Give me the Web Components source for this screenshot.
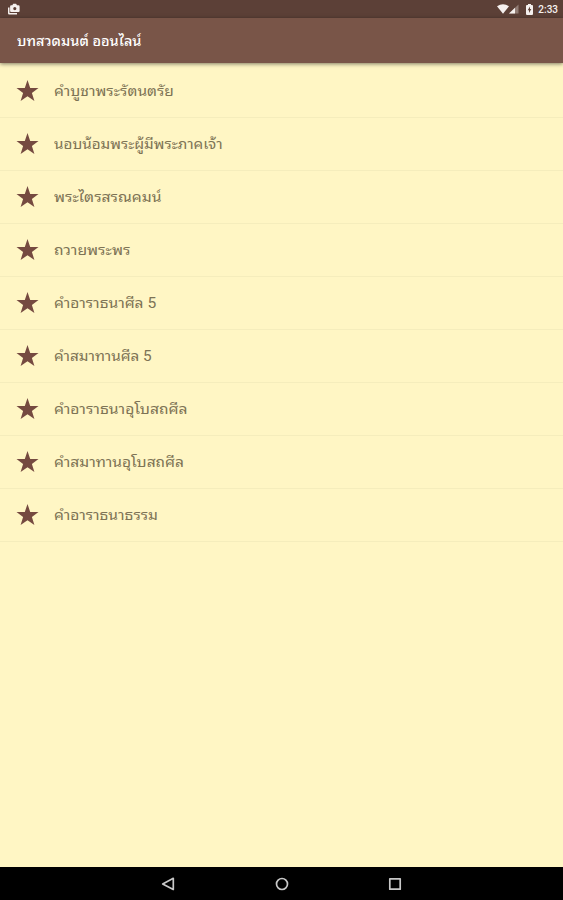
<!DOCTYPE html>
<html lang="th">
<head>
  <meta charset="utf-8">
  <meta name="viewport" content="width=device-width, initial-scale=1">
  <title>บทสวดมนต์ ออนไลน์</title>
  <style>
    body {
      margin: 0;
      height: 100vh;
      overflow: hidden;
      font-family: Roboto, "Noto Sans Thai Looped", "Noto Sans", sans-serif;
    }
  </style>
</head>
<body>
  <prayer-app></prayer-app>

  <script>
    class StatusBar extends HTMLElement {
      constructor () {
        super()
        this.attachShadow({ mode: 'open' }).innerHTML = `
          <style>
            :host {
              display: flex;
              flex: none;
              align-items: center;
              height: 18px;
              box-sizing: border-box;
              padding: 0 5px 0 8px;
              background: #5c4037;
              color: #f5f0ee;
              font-size: 10px;
              font-weight: 500;
            }
            svg { display: block; fill: currentColor; }
            .camera { margin-right: auto; }
            .battery { margin: 0 5px 0 7px; }
            .time { line-height: 18px; padding-top: 1px; }
          </style>
          <svg class="camera" width="12" height="12" viewBox="0 0 12 12">
            <path d="M0 4.500h1.500v5.500h7.500v1.500H1.200Q0 11.500 0 10.300z"/>
            <path fill-rule="evenodd" d="M4.300 2.300 5.200.7h2.900L9 2.300h1.500q1.100 0 1.100 1.100v4.500q0 1.100-1.100 1.100H3.200q-1.100 0-1.100-1.100V3.400q0-1.100 1.100-1.100zM6.800 4a1.600 1.600 0 1 0 0 3.200 1.600 1.600 0 1 0 0-3.200"/>
          </svg>
          <svg width="12" height="10" viewBox="0 0 12 10">
            <path d="M0 2.300Q6-2 12 2.300L6 9.800z"/>
          </svg>
          <svg width="10" height="10" viewBox="0 0 10 10">
            <path d="M0 9.500 9.500.5v9z" opacity=".35"/>
            <path d="M0 9.500 6 3.800v5.700z"/>
          </svg>
          <svg class="battery" width="7" height="11" viewBox="0 0 7 11">
            <path fill-rule="evenodd" d="M2 0h3v1h1q1 0 1 1v8q0 1-1 1H1q-1 0-1-1V2q0-1 1-1h1zM4 2.500 1.700 6.300h1.300v2.800l2.300-4H4z"/>
          </svg>
          <span class="time">2:33</span>
        `
      }
    }

    class AppToolbar extends HTMLElement {
      constructor () {
        super()
        this.attachShadow({ mode: 'open' }).innerHTML = `
          <style>
            :host {
              display: flex;
              flex: none;
              align-items: center;
              height: 45px;
              box-sizing: border-box;
              padding: 0 17px;
              background: #795548;
              box-shadow: 0 1px 4px rgba(0, 0, 0, .5);
              color: #fff;
              font-size: 14px;
              font-weight: 500;
              z-index: 1;
            }
          </style>
          <fit-text width="124"><slot></slot></fit-text>
        `
      }
    }

    // Stretches a one-line label to the width given in its attribute
    class FitText extends HTMLElement {
      constructor () {
        super()
        this.attachShadow({ mode: 'open' }).innerHTML = `
          <style>
            :host { display: block; line-height: 24px; white-space: nowrap; }
            span { display: inline-block; transform-origin: 0 50%; }
          </style>
          <span><slot></slot></span>
        `
      }

      connectedCallback () {
        requestAnimationFrame(() => {
          const label = this.shadowRoot.querySelector('span')
          const width = Number(this.getAttribute('width'))
          label.style.transform = `scaleX(${width / label.offsetWidth})`
        })
      }
    }

    class PrayerItem extends HTMLElement {
      constructor () {
        super()
        this.attachShadow({ mode: 'open' }).innerHTML = `
          <style>
            :host {
              display: flex;
              align-items: center;
              height: 53.100px;
              box-sizing: border-box;
              padding-left: 16px;
              border-bottom: 1px solid #f5edbc;
              color: #7d7355;
              font-size: 14.500px;
            }
            svg { flex: none; margin-right: 15px; fill: #754a40; }
            fit-text { padding-top: 2px; }
          </style>
          <svg width="23" height="22" viewBox="0 0 23 22">
            <path d="M11.500 0 14.200 7.900H22.500L15.900 12.900 18.400 21 11.500 16.200 4.600 21 7.100 12.900.5 7.900h8.300z"/>
          </svg>
          <fit-text width="${this.getAttribute('width')}"><slot></slot></fit-text>
        `
      }
    }

    class NavigationBar extends HTMLElement {
      constructor () {
        super()
        this.attachShadow({ mode: 'open' }).innerHTML = `
          <style>
            :host {
              display: flex;
              flex: none;
              align-items: center;
              justify-content: center;
              gap: 99.500px;
              height: 33px;
              background: #000;
            }
            svg { fill: none; stroke: #c8c8c8; stroke-width: 1.700; stroke-linejoin: round; }
          </style>
          <svg width="14" height="14" viewBox="0 0 14 14"><path d="M12.300 1.300v11.200L1.700 6.900z"/></svg>
          <svg width="14" height="14" viewBox="0 0 14 14"><circle cx="7" cy="7" r="5.500"/></svg>
          <svg width="14" height="14" viewBox="0 0 14 14"><rect x="1.800" y="1.800" width="10.400" height="10.400"/></svg>
        `
      }
    }

    class PrayerApp extends HTMLElement {
      constructor () {
        super()
        this.attachShadow({ mode: 'open' }).innerHTML = `
          <style>
            :host {
              display: flex;
              flex-direction: column;
              height: 100vh;
              background: #fff6c4;
            }
            main { flex: 1; padding-top: 1.500px; }
          </style>
          <status-bar></status-bar>
          <app-toolbar>บทสวดมนต์ ออนไลน์</app-toolbar>
          <main>
            <prayer-item width="120">คำบูชาพระรัตนตรัย</prayer-item>
            <prayer-item width="169">นอบน้อมพระผู้มีพระภาคเจ้า</prayer-item>
            <prayer-item width="107">พระไตรสรณคมน์</prayer-item>
            <prayer-item width="76">ถวายพระพร</prayer-item>
            <prayer-item width="102">คำอาราธนาศีล 5</prayer-item>
            <prayer-item width="98">คำสมาทานศีล 5</prayer-item>
            <prayer-item width="134">คำอาราธนาอุโบสถศีล</prayer-item>
            <prayer-item width="130">คำสมาทานอุโบสถศีล</prayer-item>
            <prayer-item width="104">คำอาราธนาธรรม</prayer-item>
          </main>
          <navigation-bar></navigation-bar>
        `
      }
    }

    customElements.define('fit-text', FitText)
    customElements.define('status-bar', StatusBar)
    customElements.define('app-toolbar', AppToolbar)
    customElements.define('prayer-item', PrayerItem)
    customElements.define('navigation-bar', NavigationBar)
    customElements.define('prayer-app', PrayerApp)
  </script>
</body>
</html>
